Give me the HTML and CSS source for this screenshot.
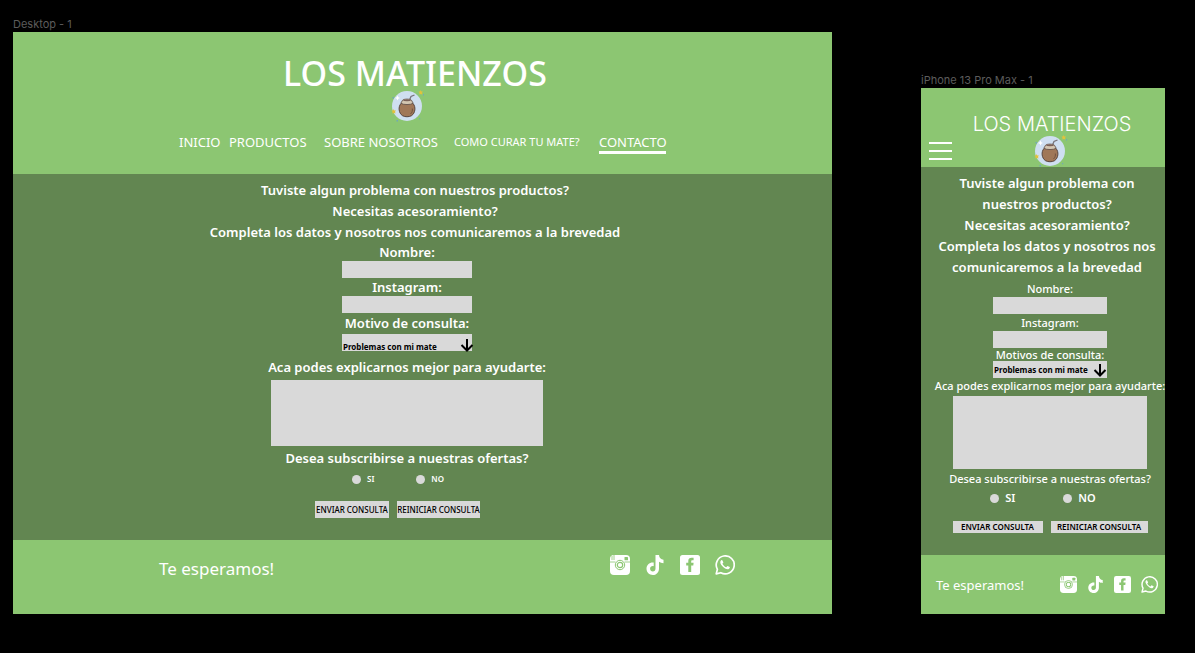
FILE: index.html
```html
<!DOCTYPE html>
<html lang="es">
<head>
<meta charset="utf-8">
<meta name="viewport" content="width=device-width, initial-scale=1">
<title>Los Matienzos - Contacto</title>
<link rel="stylesheet" href="styles.css">
</head>
<body>
<svg class="sprite" aria-hidden="true">
  <symbol id="mate" viewBox="0 0 36 34">
    <circle cx="18" cy="18" r="15" fill="#cfdff1"/>
    <path d="M31.500 2l.8 1.400 1.700.1-1 1.300.5 1.600-1.600-.5-1.500.6.100-1.500-1-1.400 1.500-.1zM4.500 21l.8 1.400 1.700.1-1 1.300.5 1.600-1.600-.5-1.500.6.100-1.500-1-1.400 1.500-.1z" fill="#e3c13c"/>
    <path d="M8.500 7.500l.8 1.700 1.700.8-1.700.8-.8 1.700-.8-1.700L6 10l1.700-.8z" fill="#fff"/>
    <path d="M3.500 9h1.500v1.500H3.500zM34 6h1v1.500h-1zM7.500 32H9v1.500H7.500zM30 30h1.200v1.200H30z" fill="#6fa8b8"/>
    <path d="M20.500 12l1.500-3.500 3.500-1.500" fill="none" stroke="#77747b" stroke-width="1.300"/>
    <path d="M12 15.500c-3 3.300-2.500 9.500 1.500 12.200 2.500 1.400 6.500 1.400 9 0 4-2.700 4.500-8.900 1.500-12.200z" fill="#a07758" stroke="#4e3b35" stroke-width=".9"/>
    <path d="M13.500 12.300c1-1.600 8-1.600 9 0l1.700 3c-2.500 1.700-9.900 1.700-12.400 0z" fill="#d3c5b1" stroke="#5a4a45" stroke-width=".8"/>
    <ellipse cx="18" cy="12.300" rx="3.800" ry=".9" fill="#7b6159"/>
    <path d="M23.300 20.500c.4 2-.2 4-1.800 5.500" fill="none" stroke="#664a3c" stroke-width=".8"/>
  </symbol>
  <symbol id="instagram" viewBox="0 0 20 20">
    <path d="M4 0h12a4 4 0 0 1 4 4v12a4 4 0 0 1-4 4H4a4 4 0 0 1-4-4V4a4 4 0 0 1 4-4z" fill="#fff"/>
    <path d="M0 7h5.500M14.500 7H20M2 1v4M4 0v5" stroke="#8cc672" stroke-width=".8"/>
    <rect x="14.500" y="2" width="3.500" height="3.300" rx=".5" fill="#8cc672"/>
    <circle cx="10" cy="10" r="4.700" fill="#fff" stroke="#8cc672" stroke-width="1"/>
    <circle cx="10" cy="10" r="2.700" fill="#fff" stroke="#8cc672" stroke-width="1.200"/>
  </symbol>
  <symbol id="tiktok" viewBox="0 0 20 20">
    <path d="M10.500 0H14c.2 2.800 1.900 4.500 4.500 4.700v3.500c-1.800 0-3.200-.5-4.500-1.400v6.600c0 4-2.800 6.600-6.200 6.600-3.500 0-6.300-2.700-6.300-6.200 0-3.900 3.200-6.700 7.200-6.200v3.600c-2-.5-3.600.7-3.600 2.500 0 1.600 1.200 2.700 2.700 2.700 1.700 0 2.700-1.200 2.700-3z" fill="#fff"/>
  </symbol>
  <symbol id="facebook" viewBox="0 0 20 20">
    <rect width="20" height="20" rx="2.500" fill="#fff"/>
    <path d="M8.300 17v-6.500H6.200V7.700h2.100V6c0-2.200 1.200-3.300 3.300-3.300h2v2.600h-1.200c-.9 0-1.200.4-1.200 1.100v1.300h2.400l-.3 2.800h-2.100V17z" fill="#8cc672"/>
  </symbol>
  <symbol id="whatsapp" viewBox="0 0 20 20">
    <path d="M1.200 18.900l1.200-4.600a9 9 0 1 1 3.400 3.400z" fill="none" stroke="#fff" stroke-width="1.700" stroke-linejoin="round"/>
    <path d="M7.300 5.200c-.5-.5-1-.3-1.400.2-1.300 1.500-.5 3.700 1.500 5.900 2.300 2.500 4.800 3.600 6.400 2.700.8-.5 1.200-1.200 1-1.900l-2.400-1.200-1.200 1.400c-1.800-.7-3-1.900-3.800-3.500l1-1.300z" fill="#fff"/>
  </symbol>
  <symbol id="arrow" viewBox="0 0 14 14">
    <path d="M7 1v11M1.500 7L7 12.500 12.500 7" fill="none" stroke="#000" stroke-width="2"/>
  </symbol>
</svg>

<main class="canvas">
  <section class="artboard desktop">
    <p class="artboard-name">Desktop - 1</p>
    <div class="frame">
      <header class="header">
        <h1 class="title">LOS MATIENZOS</h1>
        <svg class="logo" role="img" aria-label="Mate"><use href="#mate"/></svg>
        <nav class="nav">
          <a href="#inicio">INICIO</a>
          <a href="#productos">PRODUCTOS</a>
          <a href="#nosotros">SOBRE NOSOTROS</a>
          <a class="small" href="#curar">COMO CURAR TU MATE?</a>
          <a class="current" href="#contacto">CONTACTO</a>
        </nav>
      </header>
      <div class="content">
        <p class="intro">Tuviste algun problema con nuestros productos?<br>Necesitas acesoramiento?<br>Completa los datos y nosotros nos comunicaremos a la brevedad</p>
        <form class="form">
          <label class="label" for="d-nombre">Nombre:</label>
          <input class="field" id="d-nombre" type="text">
          <label class="label" for="d-instagram">Instagram:</label>
          <input class="field" id="d-instagram" type="text">
          <label class="label motive" for="d-motivo">Motivo de consulta:</label>
          <div class="picker">
            <select class="field" id="d-motivo"><option>Problemas con mi mate</option></select>
            <svg class="arrow" aria-hidden="true"><use href="#arrow"/></svg>
          </div>
          <label class="label explain" for="d-texto">Aca podes explicarnos mejor para ayudarte:</label>
          <textarea class="message" id="d-texto"></textarea>
          <p class="label offers">Desea subscribirse a nuestras ofertas?</p>
          <div class="choices">
            <label class="choice"><input type="radio" name="d-ofertas">SI</label>
            <label class="choice"><input type="radio" name="d-ofertas">NO</label>
          </div>
          <div class="actions">
            <button class="button send" type="submit">ENVIAR CONSULTA</button>
            <button class="button clear" type="reset">REINICIAR CONSULTA</button>
          </div>
        </form>
      </div>
      <footer class="footer">
        <p class="waiting">Te esperamos!</p>
        <div class="social">
          <a href="#instagram" aria-label="Instagram"><svg><use href="#instagram"/></svg></a>
          <a href="#tiktok" aria-label="TikTok"><svg><use href="#tiktok"/></svg></a>
          <a href="#facebook" aria-label="Facebook"><svg><use href="#facebook"/></svg></a>
          <a href="#whatsapp" aria-label="WhatsApp"><svg><use href="#whatsapp"/></svg></a>
        </div>
      </footer>
    </div>
  </section>

  <section class="artboard phone">
    <p class="artboard-name">iPhone 13 Pro Max - 1</p>
    <div class="frame">
      <header class="header">
        <h1 class="title">LOS MATIENZOS</h1>
        <button class="menu" type="button" aria-label="Menu"><span></span><span></span><span></span></button>
        <svg class="logo" role="img" aria-label="Mate"><use href="#mate"/></svg>
      </header>
      <div class="content">
        <p class="intro">Tuviste algun problema con<br>nuestros productos?<br>Necesitas acesoramiento?<br>Completa los datos y nosotros nos<br>comunicaremos a la brevedad</p>
        <form class="form">
          <label class="label first" for="m-nombre">Nombre:</label>
          <input class="field" id="m-nombre" type="text">
          <label class="label" for="m-instagram">Instagram:</label>
          <input class="field" id="m-instagram" type="text">
          <label class="label motive" for="m-motivo">Motivos de consulta:</label>
          <div class="picker">
            <select class="field" id="m-motivo"><option>Problemas con mi mate</option></select>
            <svg class="arrow" aria-hidden="true"><use href="#arrow"/></svg>
          </div>
          <label class="label explain" for="m-texto">Aca podes explicarnos mejor para ayudarte:</label>
          <textarea class="message" id="m-texto"></textarea>
          <p class="label offers">Desea subscribirse a nuestras ofertas?</p>
          <div class="choices">
            <label class="choice"><input type="radio" name="m-ofertas">SI</label>
            <label class="choice"><input type="radio" name="m-ofertas">NO</label>
          </div>
          <div class="actions">
            <button class="button send" type="submit">ENVIAR CONSULTA</button>
            <button class="button clear" type="reset">REINICIAR CONSULTA</button>
          </div>
        </form>
      </div>
      <footer class="footer">
        <p class="waiting">Te esperamos!</p>
        <div class="social">
          <a href="#instagram" aria-label="Instagram"><svg><use href="#instagram"/></svg></a>
          <a href="#tiktok" aria-label="TikTok"><svg><use href="#tiktok"/></svg></a>
          <a href="#facebook" aria-label="Facebook"><svg><use href="#facebook"/></svg></a>
          <a href="#whatsapp" aria-label="WhatsApp"><svg><use href="#whatsapp"/></svg></a>
        </div>
      </footer>
    </div>
  </section>
</main>
</body>
</html>
```

FILE: styles.css
```css
* { box-sizing: border-box; }

body {
  margin: 0;
  background: #000;
  color: #fff;
  font-family: "Noto Sans", sans-serif;
}

h1, p { margin: 0; }
a { color: inherit; text-decoration: none; }
svg { display: block; }
.sprite { position: absolute; width: 0; height: 0; }

.canvas {
  display: flex;
  align-items: flex-end;
  gap: 89px;
  min-height: 100vh;
  padding: 16px 30px 39px 13px;
}
.artboard { min-width: 0; }
.desktop { flex: 819 1 0; }
.phone { flex: 244 1 0; }
.artboard-name {
  color: #5c5c5c;
  font: 11px/16px Inter, sans-serif;
  white-space: nowrap;
}
.header, .footer { background: #8cc672; }
.content { background: #628651; }

.form, .content, .header { display: flex; flex-direction: column; align-items: center; }
.title { white-space: nowrap; }
.intro {
  font-weight: 600;
  font-size: 13px;
  line-height: 21px;
  text-align: center;
  white-space: nowrap;
}
.label {
  font-weight: 600;
  font-size: 13px;
  line-height: 18px;
  white-space: nowrap;
}
.field, .message, .button {
  display: block;
  margin: 0;
  border: 0;
  border-radius: 0;
  padding: 0;
  background: #d9d9d9;
  color: #000;
  font-family: inherit;
}
.field { width: 130px; height: 17px; }
.message { resize: none; }
.picker { position: relative; }
.picker .field {
  appearance: none;
  padding-left: 1px;
  font-size: 8px;
  font-weight: 700;
}
.arrow { position: absolute; top: 4px; right: -2px; width: 14px; height: 14px; pointer-events: none; }
.choices, .choice, .actions, .footer, .social { display: flex; align-items: center; }
.choice { gap: 6px; font-size: 8px; font-weight: 600; line-height: 18px; }
.choice input {
  appearance: none;
  width: 9px;
  height: 9px;
  margin: 0;
  border-radius: 50%;
  background: #d9d9d9;
}
.choice input:checked { background: #000; }
.actions { gap: 8px; }
.button { height: 17px; font-size: 8px; font-weight: 500; white-space: nowrap; }
.footer { justify-content: space-between; }
.social svg { width: 20px; height: 20px; }

/* Desktop */
.desktop .header { height: 142px; padding-top: 16px; }
.desktop .title { margin-right: 15px; font-size: 34px; font-weight: 500; line-height: 50px; }
.desktop .logo { width: 36px; height: 34px; margin: -10px 31px 0 0; }
.desktop .nav {
  display: grid;
  grid-template-columns: 50px 95px 130px 145px 67px;
  margin-top: 10px;
  font-size: 13px;
  line-height: 20px;
  white-space: nowrap;
}
.desktop .nav .small { font-size: 11px; }
.desktop .nav .current { height: 22px; border-bottom: 3px solid #fff; }
.desktop .content { padding: 6px 0 22px; }
.desktop .intro { margin-right: 15px; }
.desktop .form { margin-right: 31px; }
.desktop .motive { line-height: 21px; }
.desktop .explain { padding-top: 3px; line-height: 26px; }
.desktop .picker .field { padding-top: 7px; }
.desktop .message { width: 272px; height: 66px; }
.desktop .offers { line-height: 24px; }
.desktop .choices { gap: 42px; margin-right: 18px; }
.desktop .actions { margin: 13px 19px 0 0; }
.desktop .send { width: 74px; }
.desktop .clear { width: 83px; }
.desktop .footer { height: 74px; padding: 0 97px 24px 146px; }
.desktop .waiting { padding-top: 6px; font-size: 17px; }
.desktop .social { gap: 15px; }

/* Phone */
.phone .header {
  display: grid;
  grid-template-columns: 1fr auto 1fr;
  grid-template-rows: 47px 32px;
  padding-left: 14px;
}
.phone .title {
  grid-column: 1 / -1;
  justify-self: center;
  padding: 24px 0 0 4px;
  font: 300 20px/26px Inter, sans-serif;
}
.menu {
  display: flex;
  flex-direction: column;
  gap: 6px;
  width: 23px;
  margin-left: -6px;
  padding: 0;
  border: 0;
  background: none;
}
.menu span { height: 2px; background: #fff; }
.phone .logo { width: 36px; height: 34px; margin-top: -2px; }
.phone .content { padding: 6px 0 22px 14px; }
.phone .intro { margin-right: 6px; }
.phone .label { font-size: 11px; font-weight: 500; line-height: 17px; }
.phone .first { padding-top: 2px; }
.phone .motive { line-height: 13px; }
.phone .field { width: 114px; }
.phone .arrow { top: 2px; right: 0; }
.phone .explain { padding-bottom: 2px; line-height: 16px; }
.phone .message { width: 194px; height: 73px; }
.phone .offers { line-height: 20px; }
.phone .choices { gap: 48px; margin-right: 14px; }
.phone .choice { font-size: 11px; }
.phone .actions { margin-top: 14px; }
.phone .button { height: 12px; font-weight: 600; line-height: 12px; }
.phone .send { width: 90px; }
.phone .clear { width: 97px; }
.phone .footer { height: 59px; padding: 0 7px 0 15px; }
.phone .waiting { font-size: 13px; }
.phone .social { gap: 10px; }
.phone .social svg { width: 17px; height: 17px; }
```
